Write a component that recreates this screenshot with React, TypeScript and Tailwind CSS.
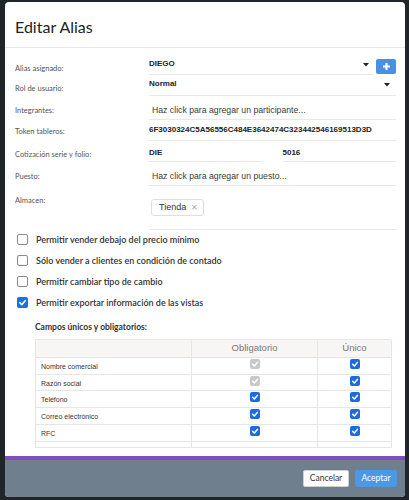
import React from "react";

const SANS = { fontFamily: "Lato, 'Open Sans', sans-serif" };
const ARIAL = { fontFamily: "'Liberation Sans', Arial, sans-serif" };

function Caret() {
  return (
    <svg width="6" height="4" viewBox="0 0 6 4" className="block">
      <path d="M0 0 L6 0 L3 3.5 Z" fill="#222" />
    </svg>
  );
}

function Check({ color = "#1a6ce0", size = 10 }: { color?: string; size?: number }) {
  return (
    <div
      className="flex items-center justify-center rounded-[2px]"
      style={{ width: size, height: size, background: color }}
    >
      <svg width={size - 2} height={size - 2} viewBox="0 0 10 10">
        <path d="M2 5.2 L4.2 7.4 L8.2 2.8" fill="none" stroke="#fff" strokeWidth="1.8" strokeLinecap="round" strokeLinejoin="round" />
      </svg>
    </div>
  );
}

function Box({ checked }: { checked?: boolean }) {
  if (checked) return <Check size={11} color="#1a6fe3" />;
  return <div className="w-[11px] h-[11px] rounded-[2px] border border-[#8a8a8a] bg-white" />;
}

export default function App() {
  const rows = [
    { name: "Nombre comercial", ob: "dis", un: true, h: "h-[17px]" },
    { name: "Razón social", ob: "dis", un: true, h: "h-[16px]" },
    { name: "Teléfono", ob: "on", un: true, h: "h-[17px]" },
    { name: "Correo electrónico", ob: "on", un: true, h: "h-[17px]" },
    { name: "RFC", ob: "on", un: true, h: "h-[17px]" },
  ];
  const checks = [
    { t: "Permitir vender debajo del precio mínimo", c: false },
    { t: "Sólo vender a clientes en condición de contado", c: false },
    { t: "Permitir cambiar tipo de cambio", c: false },
    { t: "Permitir exportar información de las vistas", c: true },
  ];
  const label = "w-[134px] shrink-0 text-[7.5px] leading-[12px] text-[#555]";
  const value = "text-[8px] leading-[12px] font-bold text-[#222]";
  const ph = "text-[8.7px] leading-[12px] text-[#3a3a3a] pl-[3px]";
  return (
    <div className="w-[409px] h-[500px] bg-[#1f2529] pt-[2px] pl-[5px] overflow-hidden">
      <div className="w-[400px] h-[495px] bg-white rounded-[4px] flex flex-col overflow-hidden">
        {/* header */}
        <div className="h-[46px] shrink-0 border-b border-[#e8e8e8] pl-[10px] pt-[15px]">
          <div className="text-[16px] leading-[20px] text-[#222]" style={SANS}>Editar Alias</div>
        </div>
        {/* body */}
        <div className="flex-1 pl-[10px] pr-[9px] pt-[8px]" >
          {/* R1 */}
          <div className="flex h-[19px]">
            <div className={`${label} pt-[7px]`} style={SANS}>Alias asignado:</div>
            <div className="flex-1 flex">
              <div className="flex-1 border-b border-[#e8e8e8] flex justify-between pt-[2px] pr-[4px]">
                <span className={value} style={ARIAL}>DIEGO</span>
                <div className="pt-[5px]"><Caret /></div>
              </div>
              <div className="w-[20px] h-[15px] mt-[3px] ml-[3px] bg-[#4a90e2] rounded-[2px] flex items-center justify-center">
                <svg width="9" height="9" viewBox="0 0 9 9"><path d="M4.5 1 V8 M1 4.5 H8" stroke="#fff" strokeWidth="2" /></svg>
              </div>
            </div>
          </div>
          {/* R2 */}
          <div className="flex h-[21px]">
            <div className={`${label} pt-[8px]`} style={SANS}>Rol de usuario:</div>
            <div className="flex-1 border-b border-[#e8e8e8] flex justify-between pt-[3px] pr-[6px]">
              <span className={value} style={ARIAL}>Normal</span>
              <div className="pt-[5px]"><Caret /></div>
            </div>
          </div>
          {/* R3 */}
          <div className="flex h-[24px]">
            <div className={`${label} pt-[9px]`} style={SANS}>Integrantes:</div>
            <div className="flex-1 border-b border-[#e8e8e8] pt-[8px]">
              <div className={ph} style={ARIAL}>Haz click para agregar un participante...</div>
            </div>
          </div>
          {/* R4 */}
          <div className="flex h-[21px]">
            <div className={`${label} pt-[6px]`} style={SANS}>Token tableros:</div>
            <div className="flex-1 border-b border-[#e8e8e8] pt-[4px]">
              <div className={value} style={ARIAL}>6F3030324C5A56556C484E3642474C323442546169513D3D</div>
            </div>
          </div>
          {/* R5 */}
          <div className="flex h-[21px]">
            <div className={`${label} pt-[8px]`} style={SANS}>Cotización serie y folio:</div>
            <div className="flex-1 flex gap-[20px]">
              <div className="flex-1 border-b border-[#e8e8e8] pt-[6px]">
                <div className={value} style={ARIAL}>DIE</div>
              </div>
              <div className="flex-1 border-b border-[#e8e8e8] pt-[6px]">
                <div className={value} style={ARIAL}>5016</div>
              </div>
            </div>
          </div>
          {/* R6 */}
          <div className="flex h-[24px]">
            <div className={`${label} pt-[9px]`} style={SANS}>Puesto:</div>
            <div className="flex-1 border-b border-[#e8e8e8] pt-[8px]">
              <div className={ph} style={ARIAL}>Haz click para agregar un puesto...</div>
            </div>
          </div>
          {/* R7 */}
          <div className="flex h-[44px]">
            <div className={`${label} pt-[9px]`} style={SANS}>Almacen:</div>
            <div className="flex-1 border-b border-[#e8e8e8] pt-[6px] pl-[2px]">
              <div className="inline-flex items-center gap-[5px] h-[17px] pl-[7px] pr-[5px] border border-[#dedede] rounded-[3px] text-[9px] text-[#333]" style={ARIAL}>
                <span>Tienda</span>
                <span className="text-[#aaa] text-[8px]">✕</span>
              </div>
            </div>
          </div>
          {/* checkboxes */}
          <div className="flex flex-col -mt-[1px]">
            {checks.map((c) => (
              <div key={c.t} className="flex items-center h-[21px] pl-[2px] gap-[8px]">
                <Box checked={c.c} />
                <span className="text-[9px] leading-[12px] font-semibold text-[#333]" style={SANS}>{c.t}</span>
              </div>
            ))}
          </div>
          <div className="pl-[20px] mt-[8px]">
            <div className="text-[8.5px] leading-[12px] font-bold text-[#333]" style={SANS}>Campos únicos y obligatorios:</div>
            <div className="mt-[6px] w-[356px] border-l border-t border-[#e6e6e6] grid grid-cols-[156px_126px_74px]" style={ARIAL}>
              <div className="h-[18px] bg-[#f8f5f5] border-r border-b border-[#e6e6e6]" />
              <div className="h-[18px] bg-[#f8f5f5] border-r border-b border-[#e6e6e6] flex items-center justify-center text-[9.5px] text-[#777]">Obligatorio</div>
              <div className="h-[18px] bg-[#f8f5f5] border-r border-b border-[#e6e6e6] flex items-center justify-center text-[9.5px] text-[#777]">Único</div>
              {rows.map((r) => (
                <React.Fragment key={r.name}>
                  <div className={`${r.h} border-r border-b border-[#e6e6e6] pl-[5px] pt-[4px] text-[7px] leading-[9px] text-[#333]`}>{r.name}</div>
                  <div className={`${r.h} border-r border-b border-[#e6e6e6] flex justify-center pt-[1px]`}>
                    <Check color={r.ob === "dis" ? "#c9c9c9" : "#1a6ce0"} />
                  </div>
                  <div className={`${r.h} border-r border-b border-[#e6e6e6] flex justify-center pt-[1px]`}>
                    <Check />
                  </div>
                </React.Fragment>
              ))}
              <div className="h-[6px] border-r border-b border-[#e6e6e6]" />
              <div className="h-[6px] border-r border-b border-[#e6e6e6]" />
              <div className="h-[6px] border-r border-b border-[#e6e6e6]" />
            </div>
          </div>
        </div>
        {/* footer */}
        <div className="h-[41px] shrink-0 border-t-4 border-[#7b50bf] bg-[#6f7f8e] flex justify-end items-start pt-[10px] pr-[8px] gap-[6px]">
          <div className="w-[46px] h-[17px] bg-white border border-[#cfcfcf] rounded-[2px] flex items-center justify-center text-[8.5px] text-[#333]" style={SANS}>Cancelar</div>
          <div className="w-[42px] h-[17px] bg-[#4b98e6] rounded-[2px] flex items-center justify-center text-[8.5px] text-white" style={SANS}>Aceptar</div>
        </div>
      </div>
    </div>
  );
}
